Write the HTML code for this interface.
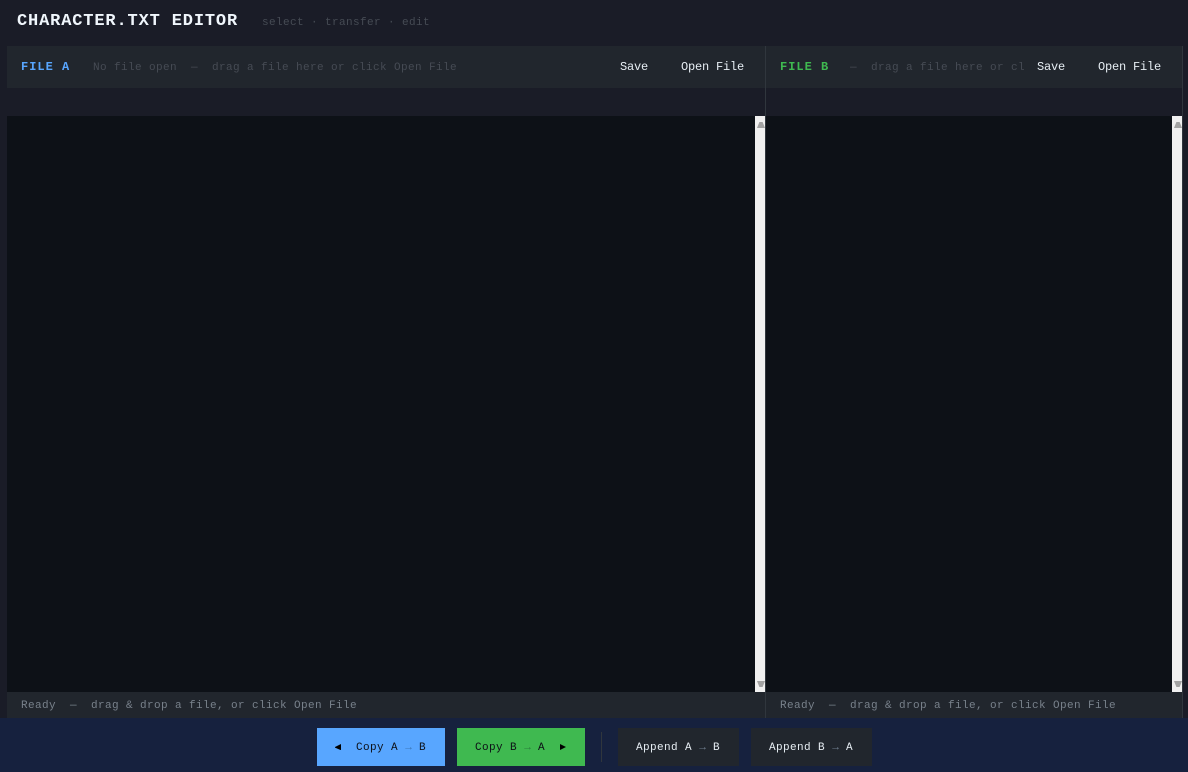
<!DOCTYPE html>
<html><head><meta charset="utf-8">
<style>
*{box-sizing:border-box;margin:0;padding:0}
html,body{width:1188px;height:772px;overflow:hidden;background:#1a1c27;font-family:"Liberation Mono",monospace;font-size:11px}
div,span{position:absolute;white-space:pre}
.title{left:17px;top:12px;font-size:17px;font-weight:bold;color:#f0f6fc;letter-spacing:.85px;line-height:20px}
.sub{left:262px;top:16px;font-size:11px;color:#464b54;line-height:14px;letter-spacing:.4px}
.bar{top:46px;height:42px;background:#21262d}
.ed{top:116px;height:576px;background:#0d1117}
.sb{top:116px;width:10px;height:576px;background:#f0f0f0}
.up,.dn{position:absolute;left:2px;width:8px;height:6px;background:#a3a3a3}
.up{top:6px;clip-path:polygon(30% 0,70% 0,100% 100%,0 100%)}
.dn{bottom:5px;clip-path:polygon(0 0,100% 0,70% 100%,30% 100%)}
.st{top:692px;height:26px;background:#21262d}
.t{line-height:14px}
.lbl{top:60px;font-weight:bold;font-size:12px;letter-spacing:1px}
.hint{top:61px;color:#464b54;letter-spacing:.4px}
.act{top:60px;color:#e6edf3;font-size:12px;letter-spacing:-.2px}
.stt{top:699px;color:#78818b;letter-spacing:.4px}
.vl{top:46px;width:1px;height:672px;background:#30363d}
.foot{left:0;top:718px;width:1188px;height:54px;background:#16213e}
.btn{top:728px;height:38px}
.bt{top:741px;font-size:11px;line-height:14px;letter-spacing:.4px}
.ar{position:static;display:inline-block;width:7px;text-align:center;font-size:11px;letter-spacing:0;color:#6f7e8f}
</style></head>
<body>
<div class="title">CHARACTER.TXT EDITOR</div>
<div class="sub">select · transfer · edit</div>

<div class="bar" style="left:7px;width:758px"></div>
<div class="bar" style="left:766px;width:416px"></div>
<div class="t lbl" style="left:21px;color:#58a6ff">FILE A</div>
<div class="t hint" style="left:93px">No file open  —  drag a file here or click Open File</div>
<div class="t act" style="left:620px">Save</div>
<div class="t act" style="left:681px">Open File</div>
<div class="t lbl" style="left:780px;color:#3fb950">FILE B</div>
<div class="t hint" style="left:850px;width:175px;overflow:hidden">—  drag a file here or click Open File</div>
<div class="t act" style="left:1037px">Save</div>
<div class="t act" style="left:1098px">Open File</div>

<div class="ed" style="left:7px;width:748px"></div>
<div class="sb" style="left:755px"><i class="up"></i><i class="dn"></i></div>
<div class="ed" style="left:766px;width:406px"></div>
<div class="sb" style="left:1172px"><i class="up"></i><i class="dn"></i></div>

<div class="st" style="left:7px;width:758px"></div>
<div class="st" style="left:766px;width:416px"></div>
<div class="t stt" style="left:21px">Ready  —  drag &amp; drop a file, or click Open File</div>
<div class="t stt" style="left:780px">Ready  —  drag &amp; drop a file, or click Open File</div>

<div class="vl" style="left:765px"></div>
<div class="vl" style="left:1182px"></div>

<div class="foot"></div>
<div class="btn" style="left:317px;width:128px;background:#58a6ff"></div>
<div class="btn" style="left:457px;width:128px;background:#3fb950"></div>
<div style="left:601px;top:732px;width:1px;height:30px;background:#30363d"></div>
<div class="btn" style="left:618px;width:121px;background:#21262d"></div>
<div class="btn" style="left:751px;width:121px;background:#21262d"></div>

<svg style="position:absolute;left:335px;top:744px" width="7" height="6"><path d="M0 3L6 0V6H5.5L0 3.6Z" fill="#000"/></svg>
<div class="bt" style="left:356px;color:#0d1117">Copy A <span class="ar" style="color:#3c78b8">→</span> B</div>
<div class="bt" style="left:475px;color:#0d1117">Copy B <span class="ar" style="color:#2a7f3c">→</span> A</div>
<svg style="position:absolute;left:560px;top:744px" width="7" height="6"><path d="M0 0L6 3L0 6Z" fill="#000"/></svg>
<div class="bt" style="left:636px;color:#e6edf3">Append A <span class="ar">→</span> B</div>
<div class="bt" style="left:769px;color:#e6edf3">Append B <span class="ar">→</span> A</div>
</body></html>
